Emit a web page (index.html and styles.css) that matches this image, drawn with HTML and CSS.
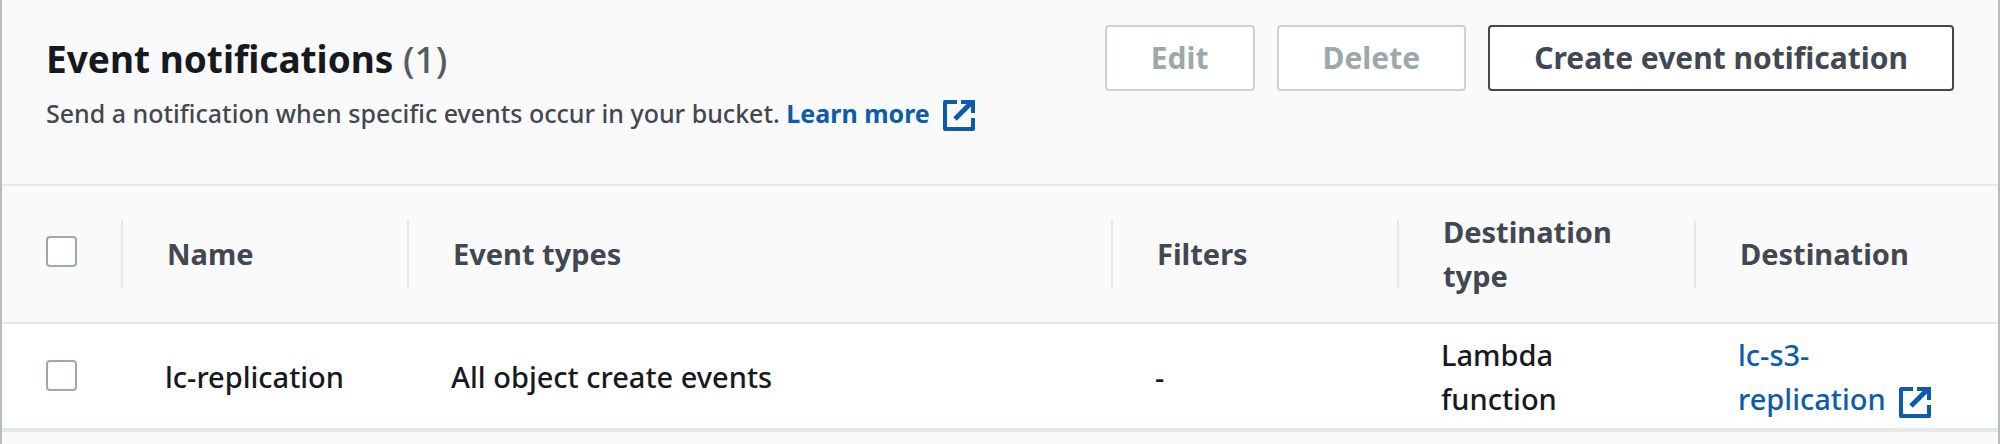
FILE: index.html
```html
<!DOCTYPE html>
<html lang="en">
<head>
<meta charset="utf-8">
<title>Event notifications</title>
<link rel="stylesheet" href="styles.css">
</head>
<body>
<svg class="sprite" aria-hidden="true">
  <symbol id="external" viewBox="0 0 32 31">
    <path d="M14 2H2V29H30V18" fill="none" stroke="currentColor" stroke-width="4" stroke-linejoin="round"/>
    <path d="M18 2H30V13" fill="none" stroke="currentColor" stroke-width="4"/>
    <path d="M28 3L12 19" fill="none" stroke="currentColor" stroke-width="5"/>
  </symbol>
</svg>
<main class="panel">
  <header class="panel-header">
    <div class="heading">
      <h2 class="title">Event notifications <span class="count">(1)</span></h2>
      <p class="description">Send a notification when specific events occur in your bucket. <a class="link learn-more" href="#">Learn more<svg class="icon" aria-hidden="true"><use href="#external"/></svg></a></p>
    </div>
    <div class="actions">
      <button class="button" type="button" disabled>Edit</button>
      <button class="button" type="button" disabled>Delete</button>
      <button class="button" type="button">Create event notification</button>
    </div>
  </header>
  <table class="table">
    <colgroup>
      <col class="col-select"><col class="col-name"><col><col class="col-filters"><col class="col-type"><col class="col-destination">
    </colgroup>
    <thead>
      <tr>
        <th scope="col"><div class="head select"><input class="checkbox" type="checkbox" aria-label="Select all"></div></th>
        <th scope="col"><div class="head">Name</div></th>
        <th scope="col"><div class="head">Event types</div></th>
        <th scope="col"><div class="head">Filters</div></th>
        <th scope="col"><div class="head">Destination type</div></th>
        <th scope="col"><div class="head">Destination</div></th>
      </tr>
    </thead>
    <tbody>
      <tr>
        <td class="select"><input class="checkbox" type="checkbox" aria-label="Select lc-replication"></td>
        <td>lc-replication</td>
        <td>All object create events</td>
        <td>-</td>
        <td>Lambda function</td>
        <td><a class="link" href="#">lc-s3-<br>replication<svg class="icon" aria-hidden="true"><use href="#external"/></svg></a></td>
      </tr>
    </tbody>
  </table>
</main>
</body>
</html>
```
FILE: styles.css
```css
* {
  box-sizing: border-box;
}

body {
  margin: 0;
  min-height: 100vh;
  display: flex;
  background: #fafafa;
  color: #16191f;
  font: 500 29px/44px "Noto Sans", "Open Sans", sans-serif;
}

.sprite {
  position: absolute;
  width: 0;
  height: 0;
}

.panel {
  flex: 1;
  min-width: 0;
  border: solid #b4bfc3;
  border-width: 0 2px;
}

.panel-header {
  display: flex;
  justify-content: space-between;
  gap: 44px;
  padding: 25px 44px 49px;
  border-bottom: 2px solid #e4e8e8;
}

.title {
  margin: 10px 0 0;
  font-size: 37px;
  line-height: 48px;
}

.count {
  color: #545b64;
  font-weight: 500;
}

.description {
  margin: 8px 0 0;
  color: #424852;
  font-size: 25px;
  line-height: 44px;
}

.link {
  color: #0b5cad;
  text-decoration: none;
}

.learn-more {
  font-weight: 700;
}

.icon {
  width: 32px;
  height: 31px;
  margin-left: 13px;
  vertical-align: -8px;
}

.actions {
  display: flex;
  flex: none;
  align-items: flex-start;
  gap: 22px;
}

.button {
  height: 66px;
  padding: 0 44px;
  border: 2px solid #424852;
  border-radius: 4px;
  background: #fff;
  color: #424852;
  font: inherit;
  font-size: 30px;
  font-weight: 700;
}

.button:disabled {
  border-color: #cad3d2;
  color: #9ba9aa;
}

.table {
  width: 100%;
  table-layout: fixed;
  border-collapse: separate;
  border-spacing: 0;
}

.col-select {
  width: 121px;
}

.col-name,
.col-filters {
  width: 286px;
}

.col-type {
  width: 297px;
}

.col-destination {
  width: 302px;
}

th {
  height: 138px;
  padding: 0;
  border-bottom: 2px solid #e4e8e8;
  color: #424852;
  text-align: left;
}

.head {
  display: flex;
  align-items: center;
  height: 68px;
  padding: 0 24px 0 44px;
  border-right: 2px solid #e4e8e8;
}

.head.select {
  padding-bottom: 6px;
}

th:last-child .head {
  border-right: 0;
}

td {
  padding: 9px 24px 7px 42px;
  border-bottom: 4px solid #e4e8e8;
  background: #fff;
}

td.select {
  padding: 6px 0 8px 44px;
}

.checkbox {
  display: block;
  appearance: none;
  width: 31px;
  height: 31px;
  margin: 0;
  border: 2px solid #9ba9aa;
  border-radius: 4px;
  background: #fff;
}
```
